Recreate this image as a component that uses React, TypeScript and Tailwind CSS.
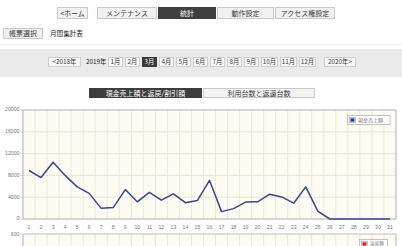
import React from "react";

const JP = { fontFamily: '"Noto Sans CJK JP", "Noto Sans", sans-serif' };

const data = [
  8900, 7600, 10400, 8000, 5900, 4700, 1950, 2100, 5400, 3150, 4900, 3450, 4600, 3000, 3400,
  7100, 1350, 1900, 3100, 3150, 4550, 4050, 2900, 5900, 1450, 0, 0, 0, 0, 0, 0,
];

function Chart() {
  const L = 23;
  const R = 396;
  const W = R - L;
  const cw = W / 31;
  const top = 12;
  const bot = 121;
  const h = bot - top;
  const yv = (v: number) => bot - (v / 20000) * h;
  const xs = (i: number) => L + cw * (i + 0.5);
  const pts = data.map((v, i) => `${xs(i).toFixed(2)},${yv(v).toFixed(2)}`).join(" ");
  const top2 = 136;
  return (
    <svg width="402" height="148" viewBox="0 0 402 148" className="block">
      {/* plot 1 */}
      <rect x={L} y={top} width={W} height={h} fill="#fffbf3" />
      {Array.from({ length: 30 }).map((_, i) => (
        <line key={"v" + i} x1={L + cw * (i + 1)} x2={L + cw * (i + 1)} y1={top} y2={bot} stroke="#efe6d8" strokeWidth="1" />
      ))}
      {[1, 2, 3, 4].map((k) => (
        <line key={"h" + k} x1={L} x2={R} y1={top + (h / 5) * k} y2={top + (h / 5) * k} stroke="#ebe3d6" strokeWidth="1" />
      ))}
      <rect x={L} y={top} width={W} height={h} fill="none" stroke="#bdbdbd" strokeWidth="1.2" />
      {[20000, 16000, 12000, 8000, 4000, 0].map((v) => (
        <g key={"y" + v}>
          <line x1={20.5} x2={L} y1={yv(v)} y2={yv(v)} stroke="#c8c8c8" strokeWidth="0.8" />
          <text x={19.5} y={yv(v)} fontSize="5.2" fill="#777" textAnchor="end" dominantBaseline="middle" fontFamily="Liberation Sans, sans-serif">
            {v}
          </text>
        </g>
      ))}
      {data.map((_, i) => (
        <text key={"x" + i} x={xs(i)} y={129.5} fontSize="5.2" fill="#777" textAnchor="middle" dominantBaseline="middle" fontFamily="Liberation Sans, sans-serif">
          {i + 1}
        </text>
      ))}
      <polyline points={pts} fill="none" stroke="#34488c" strokeWidth="1.5" strokeLinejoin="round" />
      {/* legend 1 */}
      <rect x={347.5} y={17.5} width={42.5} height={9} fill="#fff" stroke="#b5b5b5" strokeWidth="0.8" />
      <rect x={349.5} y={19.3} width={6} height={5.4} fill="#fff" stroke="#999" strokeWidth="0.6" />
      <rect x={350.5} y={20.3} width={4} height={3.4} fill="#1e3c9c" />
      <text x={358} y={22.2} fontSize="5" fill="#777" dominantBaseline="middle" style={JP}>
        現金売上額
      </text>

      {/* plot 2 */}
      <rect x={L} y={top2} width={W} height={40} fill="#fffbf3" />
      {Array.from({ length: 30 }).map((_, i) => (
        <line key={"v2" + i} x1={L + cw * (i + 1)} x2={L + cw * (i + 1)} y1={top2} y2={148} stroke="#efe6d8" strokeWidth="1" />
      ))}
      <line x1={L} x2={R} y1={top2} y2={top2} stroke="#bdbdbd" strokeWidth="1.2" />
      <line x1={L} x2={L} y1={top2} y2={148} stroke="#bdbdbd" strokeWidth="1.2" />
      <line x1={R} x2={R} y1={top2} y2={148} stroke="#bdbdbd" strokeWidth="1.2" />
      <line x1={20.5} x2={L} y1={top2} y2={top2} stroke="#c8c8c8" strokeWidth="0.8" />
      <text x={19.5} y={top2 + 1} fontSize="5.2" fill="#777" textAnchor="end" dominantBaseline="middle" fontFamily="Liberation Sans, sans-serif">
        600
      </text>
      <rect x={359.5} y={141.5} width={28} height={9} fill="#fff" stroke="#b5b5b5" strokeWidth="0.8" />
      <rect x={361.5} y={143.3} width={6} height={5.4} fill="#fff" stroke="#999" strokeWidth="0.6" />
      <rect x={362.5} y={144.3} width={4} height={3.4} fill="#e02020" />
      <text x={370} y={145.6} fontSize="4.6" fill="#777" dominantBaseline="middle" style={JP}>
        返戻額
      </text>
    </svg>
  );
}

const navBtn =
  "h-[12px] flex items-center justify-center border border-[#c9c9c9] bg-[#f1f1f1] text-[7px] leading-none text-[#3a3a3a] whitespace-nowrap";
const yrBtn =
  "h-[10px] flex items-center justify-center border border-[#cfcfcf] bg-[#f7f7f7] text-[6.3px] leading-none text-[#3a3a3a] whitespace-nowrap";

export default function App() {
  const months = ["1月", "2月", "3月", "4月", "5月", "6月", "7月", "8月", "9月", "10月", "11月", "12月"];
  return (
    <div className="w-[402px] h-[246px] overflow-hidden bg-white" style={JP}>
      {/* nav */}
      <div className="flex pt-[7px] pl-[57px]">
        <div className={navBtn + " w-[31px]"}>&lt;ホーム</div>
        <div className="flex ml-[9px] gap-[1px]">
          <div className={navBtn + " w-[60px]"}>メンテナンス</div>
          <div className="h-[12px] w-[58px] flex items-center justify-center bg-[#3f3f3f] text-[7px] leading-none text-white">統計</div>
          <div className={navBtn + " w-[57px]"}>動作設定</div>
          <div className={navBtn + " w-[60px]"}>アクセス権設定</div>
        </div>
      </div>
      {/* row 2 */}
      <div className="flex items-center mt-[9px] pl-[3px]">
        <div className="h-[11px] w-[40px] flex items-center justify-center border border-[#c9c9c9] bg-[#efefef] text-[7px] leading-none text-[#3a3a3a]">
          帳票選択
        </div>
        <div className="ml-[7px] text-[6.6px] leading-none text-[#222] whitespace-nowrap">月間集計表</div>
      </div>
      <div className="mt-[5px] border-b border-[#f0f0f0]" />
      {/* year band */}
      <div className="mt-[4px] h-[28px] bg-[#eaeaea] pt-[8px]">
        <div className="flex items-center pl-[48px]">
          <div className={yrBtn + " w-[33px]"}>&lt;2018年</div>
          <div className="ml-[5px] w-[21px] text-[6.3px] leading-none text-[#222] whitespace-nowrap">2019年</div>
          <div className="ml-[1px] flex gap-[2px]">
            {months.map((m, i) =>
              i === 2 ? (
                <div key={m} className="h-[10px] w-[15px] flex items-center justify-center bg-[#3a3a3a] text-[6.3px] leading-none text-white">
                  {m}
                </div>
              ) : (
                <div key={m} className={yrBtn + (i >= 9 ? " w-[17px]" : " w-[15px]")}>
                  {m}
                </div>
              )
            )}
          </div>
          <div className={yrBtn + " ml-[8px] w-[32px]"}>2020年&gt;</div>
        </div>
      </div>
      {/* tabs */}
      <div className="flex mt-[11px] pl-[89px] gap-[1px]">
        <div className="h-[10px] w-[113px] flex items-center justify-center bg-[#3d3d3d] text-[7px] leading-none text-white whitespace-nowrap">
          現金売上額と返戻/割引額
        </div>
        <div className="h-[10px] w-[112px] flex items-center justify-center border border-[#c9c9c9] bg-[#f3f3f3] text-[7px] leading-none text-[#3a3a3a] whitespace-nowrap">
          利用台数と返還台数
        </div>
      </div>
      <Chart />
    </div>
  );
}
